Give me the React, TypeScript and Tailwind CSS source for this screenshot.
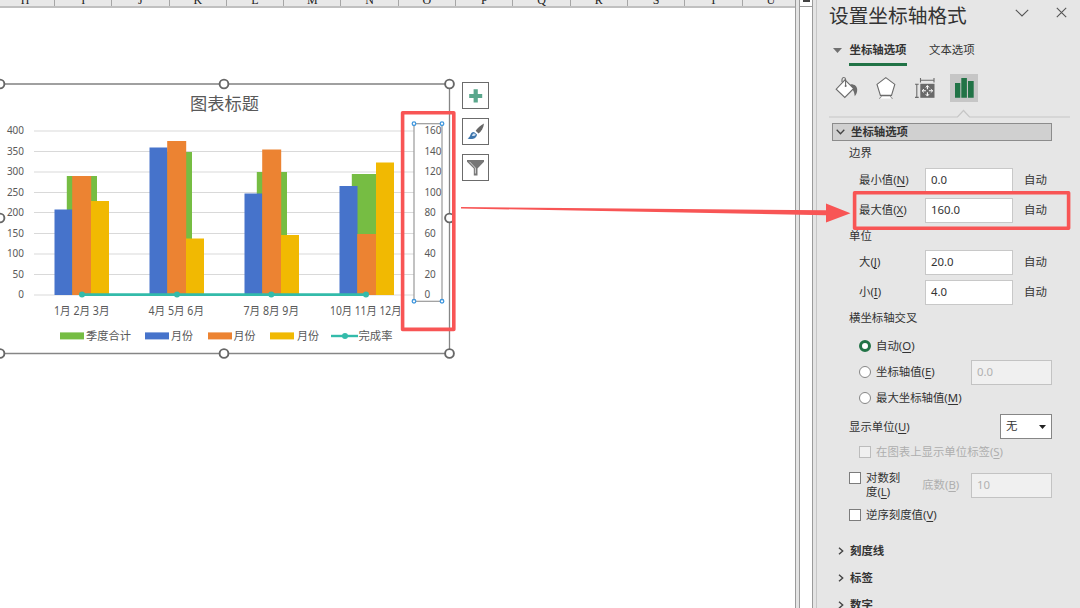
import type { ReactNode } from "react";

const COLUMNS = ["I", "J", "K", "L", "M", "N", "O", "P", "Q", "R", "S", "T", "U"];

const GRID_Y = [131, 151.5, 172, 192.5, 212.5, 233.5, 254, 274.5, 295];
const LEFT_TICKS = ["400", "350", "300", "250", "200", "150", "100", "50", "0"];
const RIGHT_TICKS = ["160", "140", "120", "100", "80", "60", "40", "20", "0"];

const GREEN = "#76bd43";
const BLUE = "#4673cb";
const ORANGE = "#ec8332";
const YELLOW = "#f1b902";
const TEAL = "#33bbaa";

// Tops of the quarter total and of each month, per quarter
const QUARTERS = [
  { x: 54.5, total: 176, months: [209.5, 176, 201], label: "1月 2月 3月", labelX: 54, labelW: 55.5 },
  { x: 149.5, total: 152, months: [147.5, 141, 238.5], label: "4月 5月 6月", labelX: 148.5, labelW: 55.5 },
  { x: 244.5, total: 172, months: [193.5, 149.5, 235], label: "7月 8月 9月", labelX: 243.5, labelW: 55.5 },
  { x: 339.5, total: 174, months: [186, 234, 162.5], label: "10月 11月 12月", labelX: 330, labelW: 71.5 },
];

const LEGEND = [
  { x: 60, color: GREEN, label: "季度合计", textX: 86, width: 45 },
  { x: 145, color: BLUE, label: "月份", textX: 171, width: 22 },
  { x: 208, color: ORANGE, label: "月份", textX: 233.5, width: 22 },
  { x: 270, color: YELLOW, label: "月份", textX: 297, width: 22 },
];

const HANDLES = [
  [0, 84],
  [224, 84],
  [449.5, 84],
  [0, 218],
  [449.5, 218],
  [0, 353.5],
  [224, 353.5],
  [449.5, 353.5],
];

interface LabelProps {
  x: number;
  y: number;
  width: number;
  size?: number;
  children: string;
}

function Label({ x, y, width, size = 11.4, children }: LabelProps) {
  return (
    <text
      x={x}
      y={y}
      fontSize={size}
      textLength={width}
      lengthAdjust="spacingAndGlyphs"
      fill="#595959"
    >
      {children}
    </text>
  );
}

function tickWidth(text: string) {
  return text.length * 5.7;
}

function Chart() {
  return (
    <svg className="block h-[290px] w-[460px] shrink-0" viewBox="0 75 460 290">
      <path d="M0 84H449.5" stroke="#a0a0a0" strokeWidth="1.8" />
      <path d="M449.5 84V353.5H0" fill="none" stroke="#868686" strokeWidth="1.3" />
      <Label x={190} y={109.5} width={69} size={17.2}>
        图表标题
      </Label>

      {GRID_Y.map((y, i) => (
        <g key={y}>
          <path d={`M34 ${y}H414`} stroke="#d9d9d9" />
          <Label x={24 - tickWidth(LEFT_TICKS[i])} y={y + 3} width={tickWidth(LEFT_TICKS[i])} size={11}>
            {LEFT_TICKS[i]}
          </Label>
        </g>
      ))}

      {QUARTERS.map((q) => (
        <g key={q.label}>
          <rect x={q.x + 12.3} y={q.total} width="30.2" height={295 - q.total} fill={GREEN} />
          <rect x={q.x} y={q.months[0]} width="18" height={295 - q.months[0]} fill={BLUE} />
          <rect x={q.x + 17.7} y={q.months[1]} width="19" height={295 - q.months[1]} fill={ORANGE} />
          <rect x={q.x + 36.5} y={q.months[2]} width="18" height={295 - q.months[2]} fill={YELLOW} />
          <Label x={q.labelX} y={314.6} width={q.labelW} size={11.8}>
            {q.label}
          </Label>
        </g>
      ))}

      <path d="M82 294.6H366" stroke={TEAL} strokeWidth="2.6" />
      {[82, 177, 271.3, 366].map((x) => (
        <circle key={x} cx={x} cy="294.6" r="3" fill={TEAL} />
      ))}

      {LEGEND.map((item) => (
        <g key={item.x}>
          <rect x={item.x} y="332.4" width="24" height="7" fill={item.color} />
          <Label x={item.textX} y={340} width={item.width}>
            {item.label}
          </Label>
        </g>
      ))}
      <path d="M331 336H358" stroke={TEAL} strokeWidth="2.4" />
      <circle cx="345" cy="336" r="3" fill={TEAL} />
      <Label x={358.5} y={340} width={34}>
        完成率
      </Label>

      {/* Secondary axis with its own selection */}
      <rect x="414" y="123.7" width="28" height="177.6" fill="none" stroke="#9a9a9a" strokeWidth="1.2" />
      {GRID_Y.map((y, i) => (
        <Label key={y} x={424.4} y={y + 3} width={tickWidth(RIGHT_TICKS[i])} size={11}>
          {RIGHT_TICKS[i]}
        </Label>
      ))}
      {[414, 442].map((x) =>
        [123.7, 301.3].map((y) => (
          <circle key={`${x}-${y}`} cx={x} cy={y} r="1.8" fill="#fff" stroke="#3f97de" strokeWidth="1.3" />
        )),
      )}

      {HANDLES.map(([x, y]) => (
        <circle key={`${x}-${y}`} cx={x} cy={y} r="4.4" fill="#fff" stroke="#676767" strokeWidth="1.9" />
      ))}
    </svg>
  );
}

function ChartButton({ children }: { children: ReactNode }) {
  return (
    <div className="flex size-[27px] items-center justify-center border border-[#6b6b6b] bg-white">
      <svg className="size-[25px]" viewBox="0 0 25 25">
        {children}
      </svg>
    </div>
  );
}

function ChartButtons() {
  return (
    <div className="mt-[7px] ml-[2px] flex flex-col gap-[9px]">
      <ChartButton>
        <path d="M12.7 6.3V19.6M6.2 13H19.2" stroke="#5aa78c" strokeWidth="4.2" />
      </ChartButton>
      <ChartButton>
        <path d="M21 4.4c-3.2 1.7-6.6 4.6-8.3 7.4l2.8 2.8c2.9-2.4 5.1-5.9 5.5-10.2z" fill="#686868" />
        <path d="M11.6 12.6l2.9 2.6" stroke="#fff" strokeWidth="1.2" />
        <path d="M11 13c-2.5 0-3.2 1.7-3.8 3.6-.4 1.2-1 2.2-2.6 2.8 3.6 1.4 9 .7 9.4-3.9z" fill="#3e76ad" />
        <path d="M11 14.2c-1.3.3-1.8 1.6-2 2.8 1.8.2 3.3-.4 3.8-1.6z" fill="#cfe0f0" />
      </ChartButton>
      <ChartButton>
        <path d="M4 5H21V6.8L14.5 13.6V20.5H10.8V13.6L4 6.8z" fill="#777" />
        <path d="M6.5 6.8L12.4 13V18.5" fill="none" stroke="#d5d5d5" strokeWidth="1" />
      </ChartButton>
    </div>
  );
}

function Sheet() {
  return (
    <main className="flex w-[796px] shrink-0 flex-col border-r border-[#9b9b9b] bg-white">
      <div className="flex h-[8px] shrink-0 overflow-hidden border-b-2 border-[#c0c0c0] bg-[#e8e8e8] font-['Liberation_Serif',serif] text-[12px] text-[#222]">
        <span className="h-full w-[55px] shrink-0 border-r border-[#a6a6a6] pr-[4px] text-center leading-[1px]">
          H
        </span>
        {COLUMNS.map((name) => (
          <span
            key={name}
            className="h-full w-[57.3px] shrink-0 border-r border-[#a6a6a6] text-center leading-[1px]"
          >
            {name}
          </span>
        ))}
      </div>
      <div className="mt-[67px] flex">
        <Chart />
        <ChartButtons />
      </div>
    </main>
  );
}

function ScrollStrip() {
  return (
    <div className="flex w-[21px] shrink-0 border-r border-[#c6c6c6] bg-[#e4e4e4] pr-[3px] pl-[3px]">
      <div className="flex w-[14px] flex-col border-x border-[#9b9b9b] bg-white">
        <div className="flex h-[7px] justify-center border-b border-[#9b9b9b]">
          <span className="h-[2px] w-[7px] bg-[#444]" />
        </div>
      </div>
    </div>
  );
}

interface OptionLabelProps {
  text: string;
  hotkey?: string;
}

function OptionLabel({ text, hotkey }: OptionLabelProps) {
  return (
    <span className="whitespace-nowrap">
      {text}
      {hotkey && (
        <>
          (<span className="underline underline-offset-[1.5px]">{hotkey}</span>)
        </>
      )}
    </span>
  );
}

interface ValueRowProps extends OptionLabelProps {
  value: string;
}

function ValueRow({ text, hotkey, value }: ValueRowProps) {
  return (
    <div className="flex h-[30px] items-center pl-[42px]">
      <div className="w-[66px]">
        <OptionLabel text={text} hotkey={hotkey} />
      </div>
      <div className="mr-[11px] flex h-[25px] w-[88px] items-center border border-[#c8c8c8] bg-white pl-[5px] pb-[1px]">
        {value}
      </div>
      自动
    </div>
  );
}

function DisabledInput({ value }: { value: string }) {
  return (
    <div className="mr-[28px] ml-auto flex h-[25px] w-[81px] items-center border border-[#c3c3c3] bg-[#f0f0f0] pl-[5px] pb-[1px] text-[#b0b0b0]">
      {value}
    </div>
  );
}

interface RadioRowProps extends OptionLabelProps {
  checked?: boolean;
  children?: ReactNode;
}

function RadioRow({ text, hotkey, checked = false, children }: RadioRowProps) {
  return (
    <div className="flex h-[26px] items-center pl-[42px]">
      <span
        className={`mr-[5px] size-[12px] shrink-0 rounded-full bg-white ${
          checked ? "border-[3px] border-[#217346]" : "border border-[#868686]"
        }`}
      />
      <OptionLabel text={text} hotkey={hotkey} />
      {children}
    </div>
  );
}

function Checkbox({ disabled = false }: { disabled?: boolean }) {
  return (
    <span
      className={`mr-[5px] size-[12px] shrink-0 border ${
        disabled ? "border-[#bcbcbc] bg-[#f0f0f0]" : "border-[#7c7c7c] bg-white"
      }`}
    />
  );
}

function CollapsedSection({ title }: { title: string }) {
  return (
    <div className="flex h-[27px] items-center pl-[21px] font-bold">
      <svg className="mr-[6px] h-[8px] w-[6px]" viewBox="0 0 6 8">
        <path d="M1 .7L4.7 4 1 7.3" fill="none" stroke="#444" strokeWidth="1.4" />
      </svg>
      {title}
    </div>
  );
}

function PaneIcons() {
  return (
    <div className="mt-[8px] flex h-[28px] gap-[11px] pl-[16px]">
      <svg className="size-[28px]" viewBox="833 74 28 28">
        <path d="M850.5 84.2c4.2-.2 6.6 2.1 6.7 5.3.1 2.6-.9 4.9-2.4 6.7-.5-3.7-1-6-4.3-9z" fill="#6b6b6b" />
        <path d="M845 79.8L853.7 88.5 844.8 97.4 836.2 89.2z" fill="#fff" stroke="#6b6b6b" strokeWidth="1.1" />
        <path d="M842 82V79.4c0-2.6 3.6-2.6 3.6 0V86" fill="none" stroke="#6b6b6b" strokeWidth="1.1" />
        <circle cx="845.6" cy="86" r="1" fill="#6b6b6b" />
      </svg>
      <svg className="size-[28px]" viewBox="872 74 28 28">
        <path d="M879.2 98.4c1.4-.3 1.8-1.2 2.2-2.6h9c.4 1.4.8 2.3 2.2 2.6" fill="#fff" stroke="#7a7a7a" />
        <path d="M885.8 77.6L894.8 84.4 891.5 95.4H880.4L877 84.4z" fill="#fff" stroke="#6b6b6b" strokeWidth="1.1" />
      </svg>
      <svg className="size-[28px]" viewBox="911 74 28 28">
        <path
          d="M920.5 80.3H934M920.5 78V82.6M934 78V82.6M916.8 84.5V97.3M915 84.3H918.7M915 97.4H918.7"
          fill="none"
          stroke="#6b6b6b"
          strokeWidth="1.1"
        />
        <rect x="920.3" y="83.8" width="14.2" height="14" fill="#696969" />
        <path
          d="M927.4 85.8V89.3M927.4 92.3V95.8M922.4 90.8H925.9M928.9 90.8H932.4"
          stroke="#fff"
          strokeWidth="1.1"
        />
        <path
          d="M925.7 87.5l1.7-2 1.7 2M925.7 94.1l1.7 2 1.7-2M924 89.1l-2 1.7 2 1.7M930.8 89.1l2 1.7-2 1.7"
          fill="none"
          stroke="#fff"
          strokeWidth=".9"
        />
      </svg>
      <svg className="size-[28px] bg-[#c6c6c6]" viewBox="950 74 28 28">
        <path d="M955 83h5.3v14.7H955zM961.3 78h5.6v19.7h-5.6zM968 81h5.7v16.7H968z" fill="#217346" />
      </svg>
    </div>
  );
}

function FormatPane() {
  return (
    <aside className="flex min-w-0 flex-1 flex-col bg-[#e6e6e6] text-[11.4px] leading-[14px] text-[#333] [&>*]:shrink-0">
      <header className="flex h-[32px] items-center pl-[12px]">
        <h1 className="text-[19.7px] leading-[30px] text-[#333]">设置坐标轴格式</h1>
        <svg className="mb-[7px] ml-auto h-[8px] w-[14px]" viewBox="0 0 14 8">
          <path d="M.8 .8L7 7 13.2 .8" fill="none" stroke="#555" strokeWidth="1.1" />
        </svg>
        <svg className="mr-[13px] mb-[8px] ml-[27px] size-[11px]" viewBox="0 0 11 11">
          <path d="M.8 .8L10.2 10.2M10.2 .8L.8 10.2" stroke="#555" strokeWidth="1.1" />
        </svg>
      </header>

      <nav className="flex h-[34px] items-start pl-[16px]">
        <svg className="mt-[16px] mr-[7px] h-[5px] w-[9px]" viewBox="0 0 9 5">
          <path d="M0 0H9L4.5 5z" fill="#707070" />
        </svg>
        <span className="flex h-full w-[58px] justify-center border-b-[3px] border-[#217346] pt-[11px] font-bold whitespace-nowrap">
          坐标轴选项
        </span>
        <span className="pt-[11px] pl-[22px]">文本选项</span>
      </nav>

      <PaneIcons />

      <svg className="mt-[6px] ml-[12px] h-[12px] w-[241px]" viewBox="829 108 241 12">
        <path d="M829 117H957.5L963.5 110.5 969.5 117H1070" fill="none" stroke="#c6c6c6" strokeWidth="1.2" />
      </svg>

      <div className="mt-[3px] ml-[15px] flex h-[18px] w-[220px] items-center border border-[#8c8c8c] bg-[#d0d0d0] pl-[3px] font-bold">
        <svg className="mr-[6px] h-[6px] w-[9px]" viewBox="0 0 9 6">
          <path d="M.7 .8L4.5 4.8 8.3 .8" fill="none" stroke="#444" strokeWidth="1.3" />
        </svg>
        坐标轴选项
      </div>

      <div className="flex h-[24px] items-center pl-[32px]">边界</div>
      <ValueRow text="最小值" hotkey="N" value="0.0" />
      <ValueRow text="最大值" hotkey="X" value="160.0" />
      <div className="flex h-[22px] items-center pl-[32px]">单位</div>
      <ValueRow text="大" hotkey="J" value="20.0" />
      <ValueRow text="小" hotkey="I" value="4.0" />
      <div className="mb-[5px] flex h-[21px] items-center pl-[32px]">横坐标轴交叉</div>

      <RadioRow text="自动" hotkey="O" checked />
      <RadioRow text="坐标轴值" hotkey="E">
        <DisabledInput value="0.0" />
      </RadioRow>
      <RadioRow text="最大坐标轴值" hotkey="M" />

      <div className="flex h-[31px] items-center pl-[32px]">
        <OptionLabel text="显示单位" hotkey="U" />
        <div className="mr-[28px] ml-auto flex h-[25px] w-[52px] items-center justify-between border border-[#868686] bg-white pr-[5px] pb-[1px] pl-[5px]">
          无
          <svg className="mt-[2px] h-[4px] w-[7px]" viewBox="0 0 7 4">
            <path d="M0 0H7L3.5 4z" fill="#222" />
          </svg>
        </div>
      </div>

      <div className="flex h-[20px] items-center pl-[42px] text-[#aeaeae]">
        <Checkbox disabled />
        <OptionLabel text="在图表上显示单位标签" hotkey="S" />
      </div>

      <div className="mt-[2px] flex h-[42px] items-center pl-[32px]">
        <div className="flex items-start">
          <span className="flex pt-[1px]">
            <Checkbox />
          </span>
          <div>
            <div>对数刻</div>
            <OptionLabel text="度" hotkey="L" />
          </div>
        </div>
        <div className="ml-[22px] text-[#aeaeae]">
          <OptionLabel text="底数" hotkey="B" />
        </div>
        <DisabledInput value="10" />
      </div>

      <div className="mb-[13px] flex h-[18px] items-center pl-[32px]">
        <Checkbox />
        <OptionLabel text="逆序刻度值" hotkey="V" />
      </div>

      <CollapsedSection title="刻度线" />
      <CollapsedSection title="标签" />
      <CollapsedSection title="数字" />
    </aside>
  );
}

/** Red call-outs drawn across the sheet and the pane. */
function Annotations() {
  return (
    <svg className="pointer-events-none absolute inset-0 h-[608px] w-[1080px]" viewBox="0 0 1080 608">
      <g fill="none" stroke="#f85555" strokeWidth="3.6" strokeLinejoin="round">
        <rect x="402.6" y="112.8" width="51.2" height="216.6" />
        <rect x="854.6" y="192.8" width="214" height="35.4" />
      </g>
      <path d="M461 207L826 210.2V203.5L850.5 213.3 826 222.5V215.2L461 208.5z" fill="#f85555" />
    </svg>
  );
}

export default function App() {
  return (
    <div className="relative flex h-[608px] w-[1080px] overflow-hidden bg-white font-['Noto_Sans','Noto_Sans_CJK_SC',sans-serif]">
      <Sheet />
      <ScrollStrip />
      <FormatPane />
      <Annotations />
    </div>
  );
}
